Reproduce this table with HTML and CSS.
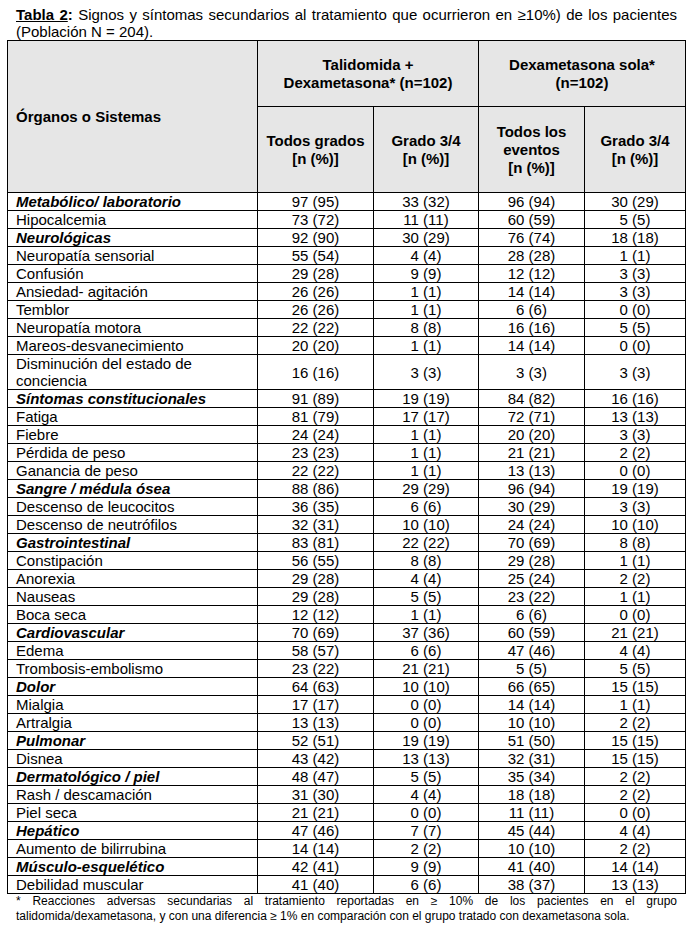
FILE: index.html
```html
<!DOCTYPE html>
<html lang="es">
<head>
<meta charset="utf-8">
<title>Tabla 2</title>
<link rel="stylesheet" href="styles.css">
</head>
<body>
<div class="page">
  <p class="caption"><span class="cap-label"><span class="cap-u">Tabla 2</span>:</span> Signos y síntomas secundarios al tratamiento que ocurrieron en ≥10%) de los pacientes (Población N = 204).</p>
  <table class="data">
    <colgroup>
      <col class="c-organ">
      <col class="c-n1">
      <col class="c-n2">
      <col class="c-n3">
      <col class="c-n4">
    </colgroup>
    <thead>
      <tr class="h1">
        <th rowspan="2" class="organ-head">Órganos o Sistemas</th>
        <th colspan="2">Talidomida +<br>Dexametasona* (n=102)</th>
        <th colspan="2">Dexametasona sola*<br>(n=102)</th>
      </tr>
      <tr class="h2">
        <th>Todos grados<br>[n (%)]</th>
        <th>Grado 3/4<br>[n (%)]</th>
        <th>Todos los<br>eventos<br>[n (%)]</th>
        <th>Grado 3/4<br>[n (%)]</th>
      </tr>
    </thead>
    <tbody>
      <tr class="grp"><td>Metabólico/ laboratorio</td><td>97 (95)</td><td>33 (32)</td><td>96 (94)</td><td>30 (29)</td></tr>
      <tr><td>Hipocalcemia</td><td>73 (72)</td><td>11 (11)</td><td>60 (59)</td><td>5 (5)</td></tr>
      <tr class="grp"><td>Neurológicas</td><td>92 (90)</td><td>30 (29)</td><td>76 (74)</td><td>18 (18)</td></tr>
      <tr><td>Neuropatía sensorial</td><td>55 (54)</td><td>4 (4)</td><td>28 (28)</td><td>1 (1)</td></tr>
      <tr><td>Confusión</td><td>29 (28)</td><td>9 (9)</td><td>12 (12)</td><td>3 (3)</td></tr>
      <tr><td>Ansiedad- agitación</td><td>26 (26)</td><td>1 (1)</td><td>14 (14)</td><td>3 (3)</td></tr>
      <tr><td>Temblor</td><td>26 (26)</td><td>1 (1)</td><td>6 (6)</td><td>0 (0)</td></tr>
      <tr><td>Neuropatía motora</td><td>22 (22)</td><td>8 (8)</td><td>16 (16)</td><td>5 (5)</td></tr>
      <tr><td>Mareos-desvanecimiento</td><td>20 (20)</td><td>1 (1)</td><td>14 (14)</td><td>0 (0)</td></tr>
      <tr class="tall"><td>Disminución del estado de conciencia</td><td>16 (16)</td><td>3 (3)</td><td>3 (3)</td><td>3 (3)</td></tr>
      <tr class="grp"><td>Síntomas constitucionales</td><td>91 (89)</td><td>19 (19)</td><td>84 (82)</td><td>16 (16)</td></tr>
      <tr><td>Fatiga</td><td>81 (79)</td><td>17 (17)</td><td>72 (71)</td><td>13 (13)</td></tr>
      <tr><td>Fiebre</td><td>24 (24)</td><td>1 (1)</td><td>20 (20)</td><td>3 (3)</td></tr>
      <tr><td>Pérdida de peso</td><td>23 (23)</td><td>1 (1)</td><td>21 (21)</td><td>2 (2)</td></tr>
      <tr><td>Ganancia de peso</td><td>22 (22)</td><td>1 (1)</td><td>13 (13)</td><td>0 (0)</td></tr>
      <tr class="grp"><td>Sangre / médula ósea</td><td>88 (86)</td><td>29 (29)</td><td>96 (94)</td><td>19 (19)</td></tr>
      <tr><td>Descenso de leucocitos</td><td>36 (35)</td><td>6 (6)</td><td>30 (29)</td><td>3 (3)</td></tr>
      <tr><td>Descenso de neutrófilos</td><td>32 (31)</td><td>10 (10)</td><td>24 (24)</td><td>10 (10)</td></tr>
      <tr class="grp"><td>Gastrointestinal</td><td>83 (81)</td><td>22 (22)</td><td>70 (69)</td><td>8 (8)</td></tr>
      <tr><td>Constipación</td><td>56 (55)</td><td>8 (8)</td><td>29 (28)</td><td>1 (1)</td></tr>
      <tr><td>Anorexia</td><td>29 (28)</td><td>4 (4)</td><td>25 (24)</td><td>2 (2)</td></tr>
      <tr><td>Nauseas</td><td>29 (28)</td><td>5 (5)</td><td>23 (22)</td><td>1 (1)</td></tr>
      <tr><td>Boca seca</td><td>12 (12)</td><td>1 (1)</td><td>6 (6)</td><td>0 (0)</td></tr>
      <tr class="grp"><td>Cardiovascular</td><td>70 (69)</td><td>37 (36)</td><td>60 (59)</td><td>21 (21)</td></tr>
      <tr><td>Edema</td><td>58 (57)</td><td>6 (6)</td><td>47 (46)</td><td>4 (4)</td></tr>
      <tr><td>Trombosis-embolismo</td><td>23 (22)</td><td>21 (21)</td><td>5 (5)</td><td>5 (5)</td></tr>
      <tr class="grp"><td>Dolor</td><td>64 (63)</td><td>10 (10)</td><td>66 (65)</td><td>15 (15)</td></tr>
      <tr><td>Mialgia</td><td>17 (17)</td><td>0 (0)</td><td>14 (14)</td><td>1 (1)</td></tr>
      <tr><td>Artralgia</td><td>13 (13)</td><td>0 (0)</td><td>10 (10)</td><td>2 (2)</td></tr>
      <tr class="grp"><td>Pulmonar</td><td>52 (51)</td><td>19 (19)</td><td>51 (50)</td><td>15 (15)</td></tr>
      <tr><td>Disnea</td><td>43 (42)</td><td>13 (13)</td><td>32 (31)</td><td>15 (15)</td></tr>
      <tr class="grp"><td>Dermatológico / piel</td><td>48 (47)</td><td>5 (5)</td><td>35 (34)</td><td>2 (2)</td></tr>
      <tr><td>Rash / descamación</td><td>31 (30)</td><td>4 (4)</td><td>18 (18)</td><td>2 (2)</td></tr>
      <tr><td>Piel seca</td><td>21 (21)</td><td>0 (0)</td><td>11 (11)</td><td>0 (0)</td></tr>
      <tr class="grp"><td>Hepático</td><td>47 (46)</td><td>7 (7)</td><td>45 (44)</td><td>4 (4)</td></tr>
      <tr><td>Aumento de bilirrubina</td><td>14 (14)</td><td>2 (2)</td><td>10 (10)</td><td>2 (2)</td></tr>
      <tr class="grp"><td>Músculo-esquelético</td><td>42 (41)</td><td>9 (9)</td><td>41 (40)</td><td>14 (14)</td></tr>
      <tr><td>Debilidad muscular</td><td>41 (40)</td><td>6 (6)</td><td>38 (37)</td><td>13 (13)</td></tr>
    </tbody>
  </table>
  <p class="footnote">* Reacciones adversas secundarias al tratamiento reportadas en ≥ 10% de los pacientes en el grupo talidomida/dexametasona, y con una diferencia ≥ 1% en comparación con el grupo tratado con dexametasona sola.</p>
</div>
</body>
</html>
```

FILE: styles.css
```css
html, body {
  margin: 0;
  padding: 0;
  background: #ffffff;
}

body {
  font-family: "Liberation Sans", Arial, sans-serif;
  color: #000;
}

.page {
  padding: 6px 13px 0 7px;
}

.caption {
  margin: 0 8px 0 9px;
  font-size: 15px;
  line-height: 17px;
  text-align: justify;
}

.cap-label {
  font-weight: bold;
}

.cap-u {
  text-decoration: underline;
}

.data {
  border-collapse: collapse;
  width: 678px;
  table-layout: fixed;
  font-size: 15px;
  line-height: 17px;
}

.c-organ { width: 250px; }
.c-n1 { width: 116px; }
.c-n2 { width: 105px; }
.c-n3 { width: 106px; }
.c-n4 { width: 101px; }

.data th,
.data td {
  border: 1px solid #000;
  padding: 0 7px;
  text-align: center;
  vertical-align: middle;
}

.data th {
  background: #e6e6e6;
  font-weight: bold;
  line-height: 18px;
}

.data th.organ-head {
  text-align: left;
  padding-left: 8px;
}

.h1 { height: 66px; }
.h2 { height: 86px; }

.data td:first-child {
  text-align: left;
  padding-left: 8px;
}

.grp td:first-child {
  font-weight: bold;
  font-style: italic;
}

.data tbody tr { height: 18px; }

.data tbody tr.tall td:first-child {
  line-height: 17px;
}

.footnote {
  margin: 0 8px 0 9px;
  font-size: 12px;
  line-height: 15px;
  text-align: justify;
}
```
